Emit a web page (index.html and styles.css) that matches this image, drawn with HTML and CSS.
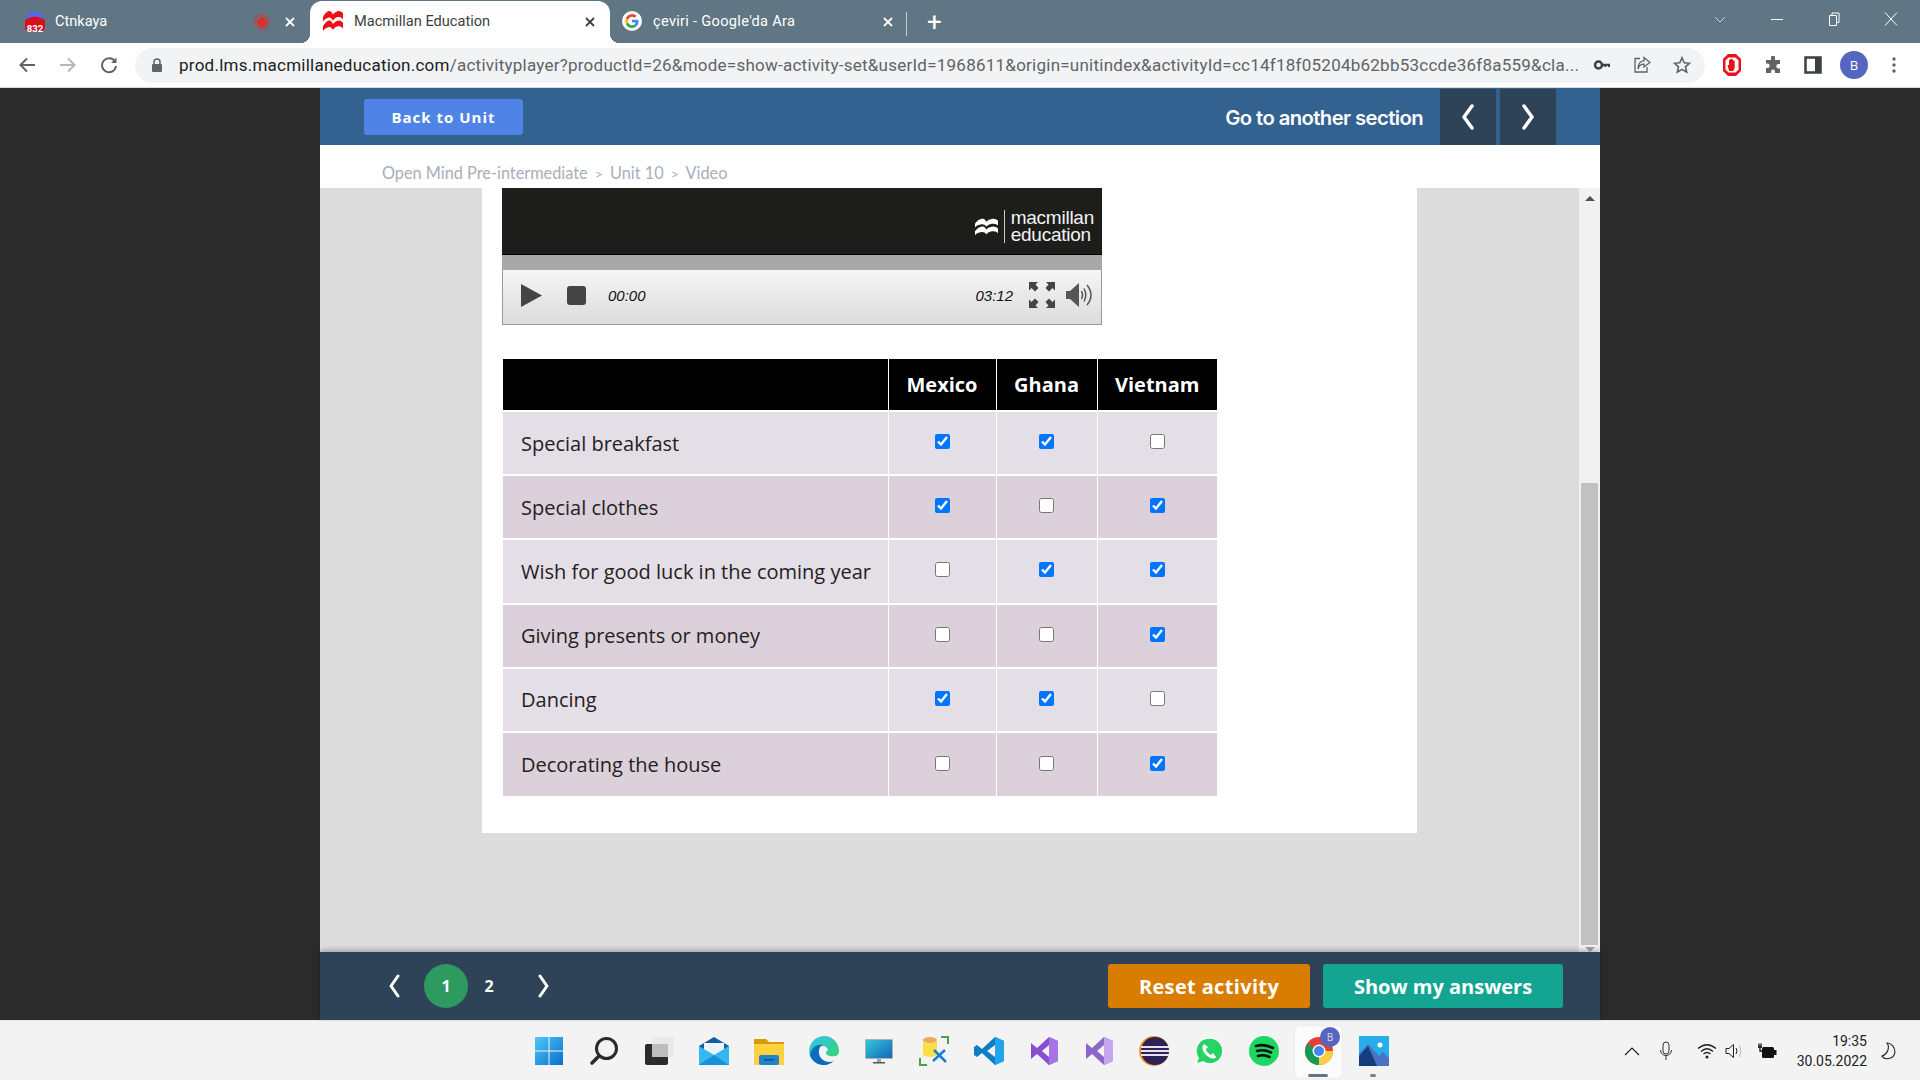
FILE: index.html
```html
<!DOCTYPE html>
<html lang="en">
<head>
  <meta charset="UTF-8" />
  <title>Macmillan Education</title>
  <link rel="stylesheet" href="styles.css">
</head>
<body>
  <!-- Browser tabs -->
  <div class="tabstrip">
    <div class="tab tab-first">
      <svg class="favicon" viewBox="0 0 20 20"><circle cx="10" cy="9" r="9" fill="#5368e6"/><path d="M0 9Q10 2 20 9V16a4 4 0 0 1-4 4H4a4 4 0 0 1-4-4Z" fill="#d9101c"/></svg>
      <span class="tab-badge">832</span>
      <span class="tab-title">Ctnkaya</span>
      <svg class="rec" viewBox="0 0 16 16"><circle cx="8" cy="8" r="7.400" fill="none" stroke="#d9302c"/><circle cx="8" cy="8" r="5.200" fill="#d9302c"/></svg>
      <svg class="tab-x" viewBox="0 0 10 10"><path d="M1 1L9 9M9 1L1 9" stroke="#fff" stroke-width="1.800"/></svg>
    </div>
    <div class="tab tab-active">
      <svg class="favicon" viewBox="0 1 24 17" preserveAspectRatio="none"><path d="M0 6C3 2 6 1 8 1C10 1 11 3 12 4C14 2 17 1 19 1C21 1 23 2 24 3V8C22 6 20 6 18 6C16 6 14 7 12 9C10 7 8 6 6 7C4 7 2 8 0 10Z M0 14C3 10 6 9 8 9C10 9 11 11 12 12C14 10 17 9 19 9C21 9 23 10 24 11V16C22 14 20 14 18 14C16 14 14 15 12 17C10 15 8 14 6 15C4 15 2 16 0 18Z" fill="#f00f14"/></svg>
      <span class="tab-title">Macmillan Education</span>
      <svg class="tab-x" viewBox="0 0 10 10"><path d="M1 1L9 9M9 1L1 9" stroke="#3c4043" stroke-width="1.800"/></svg>
    </div>
    <div class="tab tab-third">
      <svg class="favicon" viewBox="0 0 20 20"><circle cx="10" cy="10" r="10" fill="#fff"/><path d="M16.500 10.200c0-.5 0-1-.1-1.400H10v2.700h3.700a3.200 3.200 0 0 1-1.400 2.100l2.200 1.700c1.300-1.200 2-3 2-5.100z" fill="#4285f4"/><path d="M10 17c1.800 0 3.400-.6 4.500-1.700l-2.200-1.700a4.200 4.200 0 0 1-6.200-2.200L3.800 13.100A7 7 0 0 0 10 17z" fill="#34a853"/><path d="M6.100 11.400a4.200 4.200 0 0 1 0-2.700L3.800 6.900a7 7 0 0 0 0 6.200z" fill="#fbbc05"/><path d="M10 5.800c1 0 1.900.3 2.600 1l2-2A7 7 0 0 0 3.800 6.900l2.300 1.800A4.200 4.200 0 0 1 10 5.800z" fill="#ea4335"/></svg>
      <span class="tab-title">çeviri - Google'da Ara</span>
      <svg class="tab-x" viewBox="0 0 10 10"><path d="M1 1L9 9M9 1L1 9" stroke="#fff" stroke-width="1.800"/></svg>
    </div>
    <div class="tab-divider"></div>
    <span class="tab-new">+</span>
    <div class="win-controls">
      <svg class="win-btn" viewBox="0 0 14 14"><path d="M2 5 L7 10 L12 5" fill="none" stroke="#c9d2d8"/></svg>
      <svg class="win-btn" viewBox="0 0 14 14"><path d="M1 7.500 H13" stroke="#fff"/></svg>
      <svg class="win-btn" viewBox="0 0 14 14"><path d="M2.500 3.500 h7 v10 h-7z M5 3.500 V1 h7 v9.500 h-2.500" fill="none" stroke="#fff"/></svg>
      <svg class="win-btn" viewBox="0 0 14 14"><path d="M1 0.500 L13 13.500 M13 0.500 L1 13.500" stroke="#fff"/></svg>
    </div>
  </div>

  <!-- Address bar -->
  <div class="toolbar">
    <svg class="tool back" viewBox="0 0 18 18"><path d="M17 9H3 M9 2.500 L2.500 9 L9 15.500" fill="none" stroke="#5f6368" stroke-width="2"/></svg>
    <svg class="tool forward" viewBox="0 0 18 18"><path d="M1 9H15 M9 2.500 L15.500 9 L9 15.500" fill="none" stroke="#b4b7bb" stroke-width="2"/></svg>
    <svg class="tool reload" viewBox="0 0 18 18"><path d="M15 5.500 A7 7 0 1 0 16 10" fill="none" stroke="#5f6368" stroke-width="2"/><path d="M16.500 1.500 V7 H11z" fill="#5f6368"/></svg>
    <div class="omnibox">
      <svg class="lock" viewBox="0 0 12 14"><path d="M3 6V4a3 3 0 0 1 6 0v2" fill="none" stroke="#5f6368" stroke-width="1.500"/><rect x="1" y="6" width="10" height="8" rx="1" fill="#5f6368"/></svg>
      <span class="url"><b>prod.lms.macmillaneducation.com</b>/activityplayer?productId=26&amp;mode=show-activity-set&amp;userId=1968611&amp;origin=unitindex&amp;activityId=cc14f18f05204b62bb53ccde36f8a559&amp;cla...</span>
      <svg class="omni-icon key" viewBox="0 0 18 18"><circle cx="5.500" cy="9" r="3.500" fill="none" stroke="#3c4043" stroke-width="2.500"/><path d="M9 7.700 H17 V11 H15 V9.800 H13.500 V11 H11.500 V10.300 H9z" fill="#3c4043"/></svg>
      <svg class="omni-icon share" viewBox="0 0 18 18"><path d="M7 2.500 H2 V16 H14 V11" fill="none" stroke="#5f6368" stroke-width="1.300"/><path d="M11 1.500 L17 6.500 L11 11 V8.200 C8 8.200 6 10 5 13 C5 8 7.500 5 11 4.800z" fill="none" stroke="#5f6368" stroke-width="1.300"/></svg>
      <svg class="omni-icon star" viewBox="0 0 18 18"><path d="M9 1.800 L11.200 6.800 L16.500 7.300 L12.500 10.900 L13.700 16.200 L9 13.400 L4.300 16.200 L5.500 10.900 L1.500 7.300 L6.800 6.800z" fill="none" stroke="#5f6368" stroke-width="1.600"/></svg>
    </div>
    <svg class="ext opera" viewBox="0 0 20 24"><path d="M6 1h8l5 5v12l-5 5H6l-5-5V6z" fill="#e8121c"/><path d="M6.500 4.500h7l3 3v9l-3 3h-7l-3-3v-9z" fill="#fff"/><path d="M7 18 L5.500 12 L7 12 V7 h1.200 V6 h1 V5.800 h1.300 V7 h1.200 V8 h1 v7 l-1.500 3z" fill="#e8121c"/></svg>
    <svg class="ext puzzle" viewBox="0 0 18 18"><path d="M7 1.500a2 2 0 0 1 4 0V4h5v4h-1.500a2.200 2.200 0 0 0 0 4.400H16V17h-5v-1.500a2 2 0 0 0-4 0V17H2v-5h1.500a2.200 2.200 0 0 0 0-4.400H2V4h5z" fill="#5f6368"/></svg>
    <svg class="ext sidebar" viewBox="0 0 18 18"><rect x="1.500" y="1.500" width="15" height="15" fill="none" stroke="#3c4043" stroke-width="2.500"/><rect x="11" y="2" width="5" height="14" fill="#3c4043"/></svg>
    <span class="avatar">B</span>
    <svg class="ext dots" viewBox="0 0 18 18"><circle cx="9" cy="3" r="1.700" fill="#5f6368"/><circle cx="9" cy="9" r="1.700" fill="#5f6368"/><circle cx="9" cy="15" r="1.700" fill="#5f6368"/></svg>
  </div>

  <!-- Page -->
  <div class="page">
    <div class="app">
      <div class="app-header">
        <button class="back-btn">Back to Unit</button>
        <span class="section-label">Go to another section</span>
        <div class="section-nav">
          <span class="section-arrow"><svg viewBox="0 0 14 26"><path d="M11 2 L3 13 L11 24" fill="none" stroke="#fff" stroke-width="3.500" stroke-linecap="round" stroke-linejoin="round"/></svg></span>
          <span class="section-arrow"><svg viewBox="0 0 14 26"><path d="M3 2 L11 13 L3 24" fill="none" stroke="#fff" stroke-width="3.500" stroke-linecap="round" stroke-linejoin="round"/></svg></span>
        </div>
      </div>

      <div class="crumbs">Open Mind Pre-intermediate <i>&gt;</i> Unit 10 <i>&gt;</i> Video</div>

      <div class="stage">
        <div class="scroll-area">
          <div class="card">
            <div class="video">
              <div class="video-screen">
                <svg class="mac-logo" viewBox="0 1 24 17"><path d="M0 6C3 2 6 1 8 1C10 1 11 3 12 4C14 2 17 1 19 1C21 1 23 2 24 3V8C22 6 20 6 18 6C16 6 14 7 12 9C10 7 8 6 6 7C4 7 2 8 0 10Z M0 14C3 10 6 9 8 9C10 9 11 11 12 12C14 10 17 9 19 9C21 9 23 10 24 11V16C22 14 20 14 18 14C16 14 14 15 12 17C10 15 8 14 6 15C4 15 2 16 0 18Z" fill="#fff"/></svg>
                <div class="mac-name"><span>macmillan</span><span>education</span></div>
              </div>
              <div class="video-progress"></div>
              <div class="video-controls">
                <svg class="play" viewBox="0 0 14 22" preserveAspectRatio="none"><path d="M0 0 L14 11 L0 22Z" fill="#444"/></svg>
                <span class="stop"></span>
                <span class="time time-now">00:00</span>
                <span class="time time-total">03:12</span>
                <svg class="fullscreen" viewBox="0 0 26 26"><path d="M0 0H9L6.500 2.500L9.500 6L6 9.500L2.500 6L0 8.500Z M26 0H17L19.500 2.500L16.500 6L20 9.500L23.500 6L26 8.500Z M0 26H9L6.500 23.500L9.500 20L6 16.500L2.500 20L0 17.500Z M26 26H17L19.500 23.500L16.500 20L20 16.500L23.500 20L26 17.500Z" fill="#444"/></svg>
                <svg class="volume" viewBox="0 0 26 24"><path d="M0 8H4L13 0V24L4 16H0Z" fill="#555"/><path d="M15.500 8Q17.500 12 15.500 16 M18 5.500Q21.500 12 18 18.500 M21 2Q29 12 21 22" fill="none" stroke="#555" stroke-width="1.500"/></svg>
              </div>
            </div>

            <table class="grid">
              <thead>
                <tr><th></th><th>Mexico</th><th>Ghana</th><th>Vietnam</th></tr>
              </thead>
              <tbody>
                <tr><td>Special breakfast</td><td><input type="checkbox" checked></td><td><input type="checkbox" checked></td><td><input type="checkbox"></td></tr>
                <tr><td>Special clothes</td><td><input type="checkbox" checked></td><td><input type="checkbox"></td><td><input type="checkbox" checked></td></tr>
                <tr><td>Wish for good luck in the coming year</td><td><input type="checkbox"></td><td><input type="checkbox" checked></td><td><input type="checkbox" checked></td></tr>
                <tr><td>Giving presents or money</td><td><input type="checkbox"></td><td><input type="checkbox"></td><td><input type="checkbox" checked></td></tr>
                <tr><td>Dancing</td><td><input type="checkbox" checked></td><td><input type="checkbox" checked></td><td><input type="checkbox"></td></tr>
                <tr><td>Decorating the house</td><td><input type="checkbox"></td><td><input type="checkbox"></td><td><input type="checkbox" checked></td></tr>
              </tbody>
            </table>
          </div>
        </div>
        <div class="scrollbar">
          <span class="scroll-up"></span>
          <span class="scroll-thumb"></span>
          <span class="scroll-down"></span>
        </div>
      </div>

      <div class="app-footer">
        <svg class="pager-arrow" viewBox="0 0 14 24"><path d="M10 2 L3 12 L10 22" fill="none" stroke="#fff" stroke-width="3" stroke-linecap="round" stroke-linejoin="round"/></svg>
        <span class="page-no page-current">1</span>
        <span class="page-no">2</span>
        <svg class="pager-arrow pager-next" viewBox="0 0 14 24"><path d="M4 2 L11 12 L4 22" fill="none" stroke="#fff" stroke-width="3" stroke-linecap="round" stroke-linejoin="round"/></svg>
        <button class="action reset">Reset activity</button>
        <button class="action answers">Show my answers</button>
      </div>
    </div>
  </div>

  <!-- Taskbar -->
  <div class="taskbar">
    <div class="task-icons">
      <span class="task"><svg viewBox="0 0 30 30"><defs><linearGradient id="win" x1="0" y1="0" x2="1" y2="1"><stop offset="0" stop-color="#4fc6f8"/><stop offset="1" stop-color="#0670cf"/></linearGradient></defs><path d="M1 1h13.500v13.500H1z M15.500 1H29v13.500H15.500z M1 15.500h13.500V29H1z M15.500 15.500H29V29H15.500z" fill="url(#win)"/></svg></span>
      <span class="task"><svg viewBox="0 0 30 30"><circle cx="17.500" cy="12.500" r="10" fill="none" stroke="#2a2a2a" stroke-width="3"/><path d="M10 20 L3 27" stroke="#2a2a2a" stroke-width="3.500" stroke-linecap="round"/></svg></span>
      <span class="task"><svg viewBox="0 0 30 30"><rect x="8" y="1" width="22" height="20" rx="2" fill="#e9e9e9"/><rect x="1" y="8" width="23" height="21" rx="2" fill="#2b2b2b"/><rect x="8" y="8" width="16" height="13" fill="#bdbdbd"/></svg></span>
      <span class="task"><svg viewBox="0 0 30 30"><path d="M0 10 L15 1 L30 10 V14 H0Z" fill="#0f5ea8"/><path d="M5 7H25V17L15 22L5 17Z" fill="#eef3f7"/><path d="M0 10 L15 19 L30 10 V29 H0Z" fill="#35b8f0"/><path d="M0 29 L15 19 L30 29Z" fill="#1a8fdc"/></svg></span>
      <span class="task"><svg viewBox="0 0 30 30"><path d="M0 3H12L15 6H30V12H0Z" fill="#d99a06"/><path d="M0 8H30V29H0Z" fill="#fdd13f"/><rect x="5" y="19" width="20" height="10" rx="2" fill="#2085c8"/><rect x="10" y="23" width="10" height="1.500" fill="#0b4f85"/></svg></span>
      <span class="task"><svg viewBox="0 0 30 30"><defs><linearGradient id="edge" x1="0" y1="0" x2="1" y2="1"><stop offset="0" stop-color="#35c1f1"/><stop offset="1" stop-color="#36d475"/></linearGradient></defs><path d="M15 0A15 15 0 0 1 30 15C30 20 25 21 21 20C15 19 17 15 19 14C18 10 14 9 10 11C5 13 3 17 1 20A15 15 0 0 1 15 0Z" fill="url(#edge)"/><path d="M1 20C2 11 8 8 13 9C9 12 9 18 12 22C15 26 21 27 25 25A15 15 0 0 1 1 20Z" fill="#0c6cbd"/></svg></span>
      <span class="task"><svg viewBox="0 0 30 30"><rect x="1" y="3" width="28" height="20" rx="1" fill="#a9b3ba"/><defs><linearGradient id="mon" x1="0" y1="0" x2="1" y2="1"><stop offset="0" stop-color="#35c8dd"/><stop offset="1" stop-color="#1167b5"/></linearGradient></defs><rect x="2" y="4" width="26" height="18" fill="url(#mon)"/><rect x="13" y="23" width="4" height="3" fill="#9aa3a8"/><rect x="9" y="26" width="12" height="1.500" fill="#555"/></svg></span>
      <span class="task"><svg viewBox="0 0 30 30"><path d="M4 5a7 3 0 0 1 14 0V18a7 3 0 0 1-14 0Z" fill="#fde047"/><ellipse cx="11" cy="4" rx="7" ry="3" fill="#f0a95c"/><path d="M22 1H29V8 M1 22V29H8" fill="none" stroke="#4ba24c" stroke-width="2"/><path d="M14 25L26 14 M15 14L27 26" stroke="#1c7fd0" stroke-width="2.500"/></svg></span>
      <span class="task"><svg viewBox="0 0 30 30"><path d="M21 1L30 5V25L21 29L8 17L3 21L0 19V11L3 9L8 13Z M21 9L13 15L21 21Z" fill="#0c7dc7"/><path d="M21 1L30 5V25L21 29Z" fill="#22a3ea"/></svg></span>
      <span class="task"><svg viewBox="0 0 30 30"><path d="M20 1L29 5V25L20 29L8 18L2 23V7L8 12Z M20 9L13 15L20 21Z" fill="#8a4fd0"/><path d="M20 1L29 5V25L20 29Z" fill="#a873e6"/></svg></span>
      <span class="task"><svg viewBox="0 0 30 30"><path d="M20 1L29 5V25L20 29L8 18L2 23V7L8 12Z M20 9L13 15L20 21Z" fill="#8c66c9"/><path d="M20 1L29 5V25L20 29Z" fill="#c6a6ef"/></svg></span>
      <span class="task"><svg viewBox="0 0 30 30"><circle cx="15" cy="15" r="15" fill="#f7941e"/><circle cx="16" cy="15" r="14" fill="#2c2255"/><path d="M2 11H30 M2 15H30 M2 19H30" stroke="#e6e3ef" stroke-width="2"/></svg></span>
      <span class="task"><svg viewBox="0 0 30 30"><path d="M15 2A13 13 0 0 0 4 22L2 28L9 26A13 13 0 1 0 15 2Z" fill="#25d366" stroke="#fff" stroke-width="1.500"/><path d="M10 8C7 11 9 16 12 19C15 22 20 24 22 21L19 17L17 19C15 18 12 15 12 13L14 11Z" fill="#fff"/></svg></span>
      <span class="task"><svg viewBox="0 0 30 30"><circle cx="15" cy="15" r="15" fill="#1ed760"/><path d="M7 10Q15 7.500 24 12 M8 15Q15 13 22 16.500 M9 20Q15 18 20.500 21" fill="none" stroke="#111" stroke-width="2.600" stroke-linecap="round"/></svg></span>
      <span class="task task-on">
        <svg viewBox="0 0 30 30"><circle cx="15" cy="15" r="14" fill="#db4437"/><path d="M15 15L3 8A14 14 0 0 0 15 29Z" fill="#0f9d58"/><path d="M15 15L29 15A14 14 0 0 1 15 29Z" fill="#ffcd40"/><circle cx="15" cy="15" r="6.500" fill="#fff"/><circle cx="15" cy="15" r="5" fill="#4285f4"/></svg>
        <span class="task-badge">B</span>
        <span class="task-line"></span>
      </span>
      <span class="task task-open">
        <svg viewBox="0 0 30 30"><rect x="0" y="0" width="30" height="30" fill="#27aee8"/><circle cx="21" cy="9" r="2.500" fill="#fff"/><path d="M0 30V18L9 8L20 20L24 16L30 22V30Z" fill="#4a72c4"/><path d="M0 30V20L9 10L18 30Z" fill="#123f7c"/></svg>
        <span class="task-dot"></span>
      </span>
    </div>
    <div class="tray">
      <svg class="tray-icon up" viewBox="0 0 16 16"><path d="M1 12 L8 5 L15 12" fill="none" stroke="#222" stroke-width="1.200"/></svg>
      <svg class="tray-icon mic" viewBox="0 0 16 20"><rect x="5" y="1" width="6" height="12" rx="3" fill="none" stroke="#333"/><path d="M2.500 9a5.500 5.500 0 0 0 11 0 M8 14.500V19" fill="none" stroke="#333"/></svg>
      <svg class="tray-icon wifi" viewBox="0 0 20 16"><path d="M1 5.500Q10 -2 19 5.500 M4 8.500Q10 3 16 8.500 M6.500 11Q10 8 13.500 11" fill="none" stroke="#222" stroke-width="1.300"/><circle cx="10" cy="14" r="1.500" fill="#222"/></svg>
      <svg class="tray-icon speaker" viewBox="0 0 20 16"><path d="M1 5.500H4L8.500 1.500V14.500L4 10.500H1Z" fill="none" stroke="#222"/><path d="M11 5Q13 8 11 11" fill="none" stroke="#222"/><path d="M14 2Q17.500 8 14 14" fill="none" stroke="#bbb"/></svg>
      <svg class="tray-icon power" viewBox="0 0 20 18"><rect x="5" y="5" width="12" height="11" rx="1.500" fill="#111"/><rect x="17" y="8" width="2.500" height="5" fill="#111"/><path d="M1 5H5 M2 1.500V5 M4 1.500V5" fill="none" stroke="#111" stroke-width="1.300"/><path d="M3 5V9H6" fill="none" stroke="#111" stroke-width="1.300"/></svg>
      <div class="clock"><span>19:35</span><span>30.05.2022</span></div>
      <svg class="tray-icon moon" viewBox="0 0 16 20"><path d="M7 2C10 6 8 13 2 15C4 19 14 19 15 11C15 6 11 2 7 2Z" fill="none" stroke="#222" stroke-width="1.100"/></svg>
    </div>
  </div>
</body>
</html>
```
FILE: styles.css
```css
* {
  box-sizing: border-box;
}

html,
body {
  margin: 0;
  height: 100%;
}

body {
  width: 1920px;
  height: 1080px;
  overflow: hidden;
  display: flex;
  flex-direction: column;
  font-family: "Open Sans", sans-serif;
  background: #2b2b2b;
}

svg {
  display: block;
  flex: none;
}

/* tabs */
.tabstrip {
  height: 43px;
  flex: none;
  display: flex;
  align-items: flex-end;
  background: #607684;
  color: #fff;
  font-family: "Roboto", sans-serif;
  font-size: 14.600px;
}

.tab {
  position: relative;
  display: flex;
  align-items: center;
  height: 42px;
  padding: 0 0 2px 25px;
}

.tab-first {
  width: 310px;
}

.tab-first .favicon {
  margin-right: 10px;
}

.tab-active {
  width: 300px;
  padding-left: 13px;
  background: #fff;
  color: #3c4043;
  border-radius: 12px 12px 0 0;
}

.tab-active::before,
.tab-active::after {
  content: "";
  position: absolute;
  bottom: 0;
  width: 10px;
  height: 10px;
}

.tab-active::before {
  left: -10px;
  background: radial-gradient(circle at 0 0, transparent 10px, #fff 10.500px);
}

.tab-active::after {
  right: -10px;
  background: radial-gradient(circle at 100% 0, transparent 10px, #fff 10.500px);
}

.tab-third {
  width: 296px;
  padding-left: 12px;
}

.tab-third .tab-title {
  letter-spacing: 0.300px;
}

.favicon {
  width: 20px;
  height: 20px;
  margin-right: 11px;
}

.tab-badge {
  position: absolute;
  left: 25px;
  top: 22px;
  width: 20px;
  font-size: 9.500px;
  font-weight: 700;
  line-height: 11px;
  text-align: center;
  color: #fff;
}

.rec {
  position: absolute;
  left: 254px;
  top: 13px;
  width: 16px;
  height: 16px;
}

.tab-x {
  position: absolute;
  right: 15px;
  top: 16px;
  width: 10px;
  height: 10px;
}

.tab-third .tab-x {
  right: 13px;
}

.tab-divider {
  width: 1px;
  height: 24px;
  margin-bottom: 7px;
  background: #c5ced4;
}

.tab-new {
  margin-left: 20px;
  margin-bottom: 6px;
  font-size: 26px;
  line-height: 30px;
  font-weight: 400;
}

.win-controls {
  margin-left: auto;
  align-self: stretch;
  display: flex;
  align-items: center;
  gap: 43px;
  padding: 0 22px 6px 0;
}

.win-btn {
  width: 14px;
  height: 14px;
}

/* address bar */
.toolbar {
  height: 45px;
  flex: none;
  display: flex;
  align-items: center;
  background: #fff;
  padding-left: 18px;
  border-bottom: 1px solid #d8d8d8;
}

.tool {
  width: 18px;
  height: 18px;
  margin-right: 23px;
}

.omnibox {
  width: 1570px;
  height: 35px;
  margin-left: -6px;
  display: flex;
  align-items: center;
  background: #f1f3f4;
  border-radius: 18px;
  padding-left: 16px;
  color: #5f6368;
}

.lock {
  width: 12px;
  height: 14px;
  margin-right: 16px;
}

.url {
  width: 1404px;
  white-space: nowrap;
  overflow: hidden;
  font-family: "Roboto", sans-serif;
  font-size: 17px;
  letter-spacing: 0.245px;
}

.url b {
  font-weight: 400;
  color: #202124;
}

.omni-icon {
  width: 18px;
  height: 18px;
  margin-left: 22px;
}

.key {
  margin-left: 10px;
}

.ext {
  width: 18px;
  height: 18px;
  margin-left: 22px;
}

.opera {
  width: 20px;
  height: 24px;
  margin-left: 17px;
}

.avatar {
  width: 28px;
  height: 28px;
  margin-left: 18px;
  border-radius: 50%;
  background: #5565c0;
  color: #fff;
  font-size: 13px;
  line-height: 28px;
  text-align: center;
}

.dots {
  margin-left: 17px;
}

/* page */
.page {
  flex: 1;
  min-height: 0;
  display: flex;
  justify-content: flex-start;
  padding-left: 320px;
}

.app {
  width: 1280px;
  display: flex;
  flex-direction: column;
  background: #fff;
}

.app-header {
  height: 57px;
  flex: none;
  display: flex;
  align-items: center;
  background: #336190;
  padding: 1px 44px 0;
}

.back-btn {
  width: 159px;
  height: 36px;
  border: none;
  border-radius: 3px;
  background: #4f84e6;
  color: #fff;
  font-family: "Open Sans", sans-serif;
  font-size: 15px;
  font-weight: 700;
  letter-spacing: 1px;
}

.section-label {
  margin-left: auto;
  margin-right: 17px;
  color: #fff;
  font-family: "Inter", sans-serif;
  font-size: 20.300px;
  font-weight: 600;
  letter-spacing: -0.600px;
}

.section-nav {
  display: flex;
  gap: 4px;
  align-self: stretch;
}

.section-arrow {
  width: 56px;
  display: flex;
  align-items: center;
  justify-content: center;
  background: #2e4358;
}

.section-arrow svg {
  width: 14px;
  height: 26px;
}

.crumbs {
  height: 43px;
  flex: none;
  padding: 17px 0 0 62px;
  font-family: "Lato", sans-serif;
  font-size: 16.300px;
  line-height: 22px;
  color: #a9aeb8;
}

.crumbs i {
  font-style: normal;
  margin: 0 3px;
  font-size: 14px;
}

.stage {
  flex: 1;
  min-height: 0;
  display: flex;
  background: #dcdcdc;
}

.scroll-area {
  flex: 1;
  padding-left: 162px;
}

.card {
  width: 935px;
  height: 645px;
  padding-left: 20px;
  background: #fff;
}

.video {
  width: 600px;
  height: 137px;
  display: flex;
  flex-direction: column;
  border-bottom: 1px solid #999;
}

.video-screen {
  height: 67px;
  flex: none;
  display: flex;
  align-items: center;
  justify-content: flex-end;
  padding: 11px 8px 0 0;
  background: #1d1d1b;
  border-bottom: 1px solid #000;
}

.mac-logo {
  width: 23px;
  height: 18px;
  margin-right: 6px;
}

.mac-name {
  padding-left: 6px;
  border-left: 1px solid #ccc;
  color: #f2f2f2;
  font-family: "Liberation Sans", sans-serif;
  font-size: 19px;
  letter-spacing: -0.250px;
}

.mac-name span {
  display: block;
  height: 16.500px;
  line-height: 16.500px;
}

.video-progress {
  height: 15px;
  flex: none;
  background: #a8a8a8;
}

.video-controls {
  flex: 1;
  display: flex;
  align-items: center;
  padding: 0 9px 4px 18px;
  background: linear-gradient(#f5f5f5, #dcdcdc);
  border-left: 1px solid #999;
  border-right: 1px solid #999;
}

.play {
  width: 21px;
  height: 23px;
  margin-right: 25px;
}

.stop {
  width: 19px;
  height: 19px;
  margin-right: 22px;
  border-radius: 3px;
  background: #444;
}

.time {
  font-family: "Liberation Sans", sans-serif;
  font-size: 15px;
  font-style: italic;
  color: #111;
}

.time-total {
  margin-left: auto;
  margin-right: 16px;
}

.fullscreen {
  width: 26px;
  height: 26px;
  margin-right: 11px;
}

.volume {
  width: 26px;
  height: 24px;
}

.grid {
  width: 714px;
  margin: 34px 0 0 1px;
  border-collapse: collapse;
  table-layout: fixed;
  font-family: "Open Sans", sans-serif;
}

.grid th {
  height: 52px;
  background: #000;
  color: #fff;
  font-size: 20px;
  font-weight: 700;
  border-left: 1px solid #fff;
}

.grid th:first-child {
  width: 385px;
  border-left: none;
}

.grid th:nth-child(2) {
  width: 108px;
}

.grid th:nth-child(3) {
  width: 101px;
}

.grid td {
  height: 64.200px;
  text-align: center;
  font-size: 20px;
  color: #222;
  border-left: 1px solid #fff;
  border-top: 2px solid #fff;
}

.grid td:first-child {
  padding-left: 18px;
  text-align: left;
  border-left: none;
}

.grid tbody tr:nth-child(odd) td {
  background: #e4dee6;
}

.grid tbody tr:nth-child(even) td {
  background: #dcd0da;
}

.grid input {
  display: block;
  margin: -3px auto 0;
  width: 15px;
  height: 15px;
}

.scrollbar {
  width: 21px;
  display: flex;
  flex-direction: column;
  align-items: center;
  background: #f1f1f1;
}

.scroll-up {
  margin-top: 8px;
  border-left: 5px solid transparent;
  border-right: 5px solid transparent;
  border-bottom: 5px solid #505050;
}

.scroll-thumb {
  width: 17px;
  height: 462px;
  margin-top: 282px;
  background: #c1c1c1;
}

.scroll-down {
  margin-top: 2px;
  border-left: 5px solid transparent;
  border-right: 5px solid transparent;
  border-top: 5px solid #a3a3a3;
}

.app-footer {
  height: 68px;
  flex: none;
  display: flex;
  align-items: center;
  padding: 0 37px 0 68px;
  background: #2e4358;
  box-shadow: 0 -2px 5px rgba(0, 0, 0, 0.25);
  position: relative;
  color: #fff;
}

.pager-arrow {
  width: 14px;
  height: 24px;
  margin-right: 22px;
}

.pager-next {
  margin-left: 25px;
  margin-right: auto;
}

.page-no {
  width: 44px;
  height: 44px;
  font-size: 16px;
  font-weight: 700;
  line-height: 44px;
  text-align: center;
}

.page-current {
  margin-right: -1px;
  border-radius: 50%;
  background: #2f9a5f;
}

.action {
  height: 44px;
  padding-top: 2px;
  border: none;
  border-radius: 3px;
  color: #fff;
  font-family: "Open Sans", sans-serif;
  font-size: 20px;
  font-weight: 700;
}

.reset {
  width: 202px;
  margin-right: 13px;
  background: #d97d00;
  letter-spacing: 0.350px;
}

.answers {
  width: 240px;
  background: #13a592;
}

/* taskbar */
.taskbar {
  height: 60px;
  flex: none;
  display: flex;
  align-items: center;
  background: #f3f3f3;
  border-top: 1px solid #e8e8e8;
  padding-left: 521px;
}

.task-icons {
  display: flex;
}

.task {
  position: relative;
  width: 55px;
  height: 54px;
  display: flex;
  align-items: center;
  justify-content: center;
}

.task svg {
  position: relative;
  width: 30px;
  height: 30px;
}

.task-on::before {
  content: "";
  position: absolute;
  inset: 2px 4px 0;
  background: #fbfbfb;
  border-radius: 4px;
  box-shadow: 0 0 1px rgba(0, 0, 0, 0.25);
}

.task-badge {
  position: absolute;
  right: 6px;
  top: 3px;
  width: 20px;
  height: 20px;
  border-radius: 50%;
  background: #5565c0;
  color: #ddd;
  font-size: 10px;
  line-height: 20px;
  text-align: center;
}

.task-line {
  position: absolute;
  bottom: 1px;
  left: 17px;
  width: 20px;
  height: 3px;
  border-radius: 2px;
  background: #607684;
}

.task-dot {
  position: absolute;
  bottom: 1px;
  left: 24px;
  width: 6px;
  height: 3px;
  border-radius: 2px;
  background: #808080;
}

.tray {
  margin-left: auto;
  display: flex;
  align-items: center;
  padding-right: 24px;
}

.tray-icon {
  width: 20px;
  height: 16px;
}

.mic {
  height: 20px;
  margin-left: 14px;
}

.wifi {
  margin-left: 21px;
}

.speaker {
  margin-left: 8px;
}

.power {
  height: 18px;
  margin-left: 12px;
}

.clock {
  margin-left: 20px;
  display: flex;
  flex-direction: column;
  align-items: flex-end;
  font-family: "Roboto", sans-serif;
  font-size: 14px;
  line-height: 20px;
  color: #222;
}

.moon {
  width: 16px;
  height: 20px;
  margin-left: 13px;
}
```
